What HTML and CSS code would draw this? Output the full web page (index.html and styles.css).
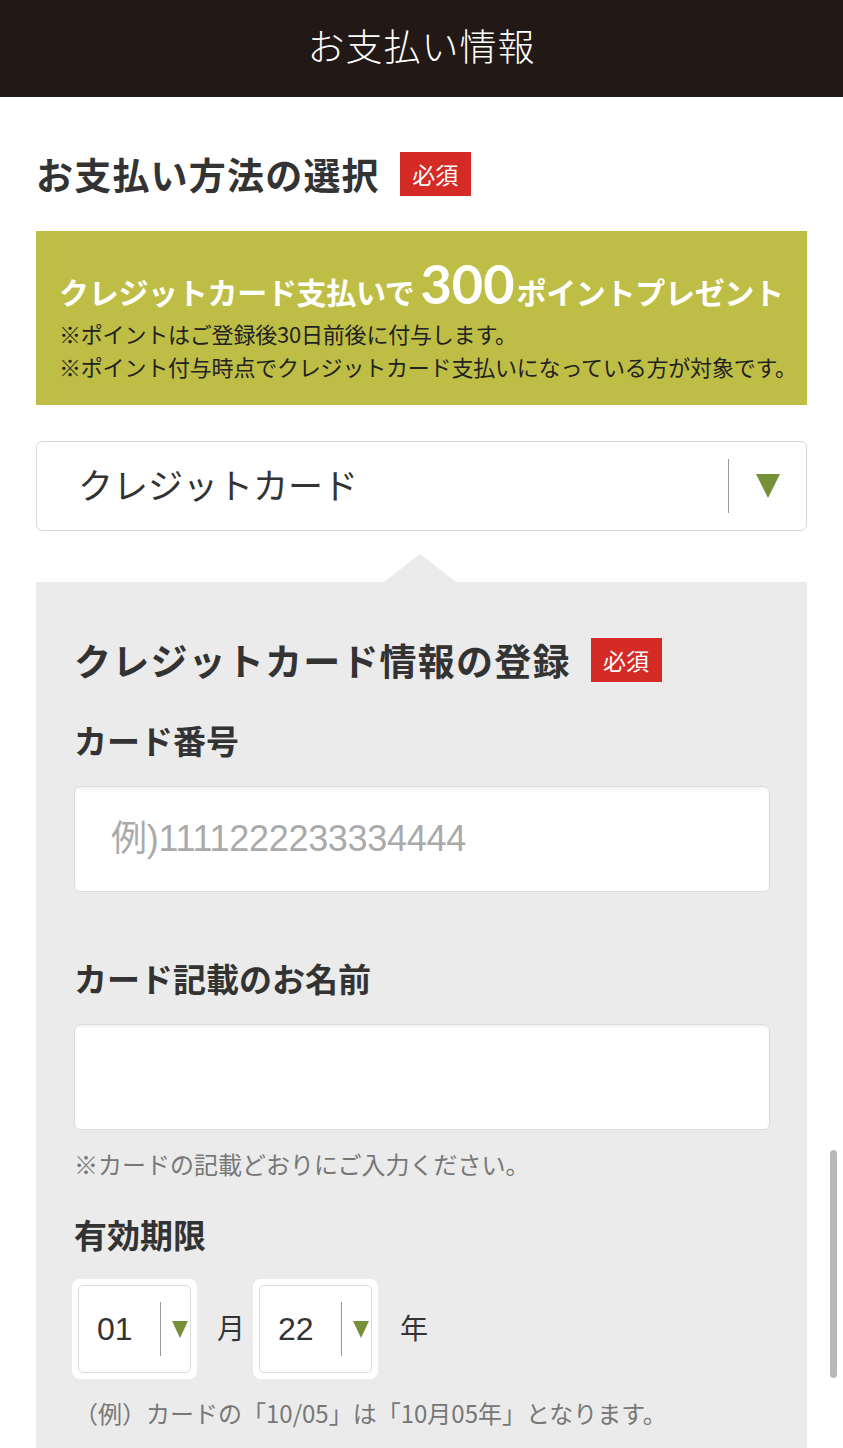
FILE: index.html
```html
<!DOCTYPE html>
<html lang="ja">

<head>
  <meta charset="UTF-8" />
  <meta name="viewport" content="width=device-width, initial-scale=1.0" />
  <title>お支払い情報</title>
  <link rel="stylesheet" href="styles.css">
</head>

<body>
  <!-- Top bar -->
  <header class="topbar">
    <h1 class="topbar-title">お支払い情報</h1>
  </header>

  <main class="content">
    <!-- Payment method -->
    <div class="section-head">
      <h2 class="section-title">お支払い方法の選択</h2>
      <span class="badge">必須</span>
    </div>

    <div class="promo">
      <p class="promo-lead">クレジットカード支払いで<span class="promo-num">300</span>ポイントプレゼント</p>
      <p class="promo-note">※ポイントはご登録後30日前後に付与します。</p>
      <p class="promo-note">※ポイント付与時点でクレジットカード支払いになっている方が対象です。</p>
    </div>

    <div class="picker">
      <span class="picker-value">クレジットカード</span>
      <span class="picker-line"></span>
      <span class="arrow arrow-lg"></span>
    </div>

    <!-- Credit card panel -->
    <section class="card-panel">
      <div class="section-head">
        <h2 class="section-title">クレジットカード情報の登録</h2>
        <span class="badge">必須</span>
      </div>

      <div class="field">
        <label class="field-label" for="card-no">カード番号</label>
        <input class="text-input" id="card-no" type="text" placeholder="例)1111222233334444" />
      </div>

      <div class="field field-name">
        <label class="field-label" for="card-name">カード記載のお名前</label>
        <input class="text-input" id="card-name" type="text" />
        <p class="hint">※カードの記載どおりにご入力ください。</p>
      </div>

      <div class="field field-date">
        <span class="field-label">有効期限</span>
        <div class="date-row">
          <div class="date-box">
            <div class="date-select">
              <span class="date-value">01</span>
              <span class="date-line"></span>
              <span class="arrow arrow-sm"></span>
            </div>
          </div>
          <span class="date-unit unit-month">月</span>
          <div class="date-box">
            <div class="date-select">
              <span class="date-value">22</span>
              <span class="date-line"></span>
              <span class="arrow arrow-sm"></span>
            </div>
          </div>
          <span class="date-unit unit-year">年</span>
        </div>
        <p class="hint hint-date">（例）カードの「10/05」は「10月05年」となります。</p>
      </div>
    </section>
  </main>

  <!-- scroll indicator -->
  <div class="scroll-thumb"></div>
</body>

</html>
```

FILE: styles.css
```css
/* base */
body {
  margin: 0;
  width: 843px;
  font-family: "Noto Sans CJK JP", "Noto Sans", sans-serif;
  color: #333;
  background-color: #fff;
}

p,
h1,
h2 {
  margin: 0;
}

/* top bar */
.topbar {
  height: 97px;
  background-color: #221815;
  display: flex;
  align-items: center;
  justify-content: center;
}

.topbar-title {
  color: #fff;
  font-size: 37px;
  font-weight: 300;
  line-height: 1;
  letter-spacing: 1px;
  margin-top: -6px;
}

/* content */
.content {
  padding: 0 36px;
}

.section-head {
  display: flex;
  align-items: center;
  gap: 20px;
  height: 44px;
  margin-top: 55px;
}

.section-title {
  font-size: 37px;
  font-weight: 700;
  letter-spacing: 1.2px;
  color: #333;
  line-height: 1;
}

.badge {
  width: 71px;
  height: 44px;
  background-color: #d42b26;
  color: #fff;
  font-size: 23px;
  line-height: 44px;
  text-align: center;
}

/* promo banner */
.promo {
  margin-top: 35px;
  height: 174px;
  box-sizing: border-box;
  padding: 26px 20px 0 23px;
  background-color: #bebe46;
}

.promo-lead {
  color: #fff;
  font-size: 30px;
  font-weight: 700;
  line-height: 60px;
  height: 60px;
  white-space: nowrap;
  letter-spacing: -0.3px;
}

.promo-num {
  font-family: "Lato", "Noto Sans", sans-serif;
  font-size: 54px;
  font-weight: 700;
  line-height: 1;
  margin: 0 2px 0 6px;
  letter-spacing: 0;
}

.promo-note {
  color: #222;
  font-size: 22px;
  line-height: 33px;
  white-space: nowrap;
  letter-spacing: -0.2px;
}

/* select box */
.picker {
  margin-top: 36px;
  height: 90px;
  box-sizing: border-box;
  border: 1px solid #d8d8d8;
  border-radius: 6px;
  background-color: #fff;
  display: flex;
  align-items: center;
  padding: 0 26px 0 41px;
}

.picker-value {
  flex: 1;
  font-size: 35px;
  color: #333;
  line-height: 1;
  margin-top: -5px;
}

.picker-line {
  width: 1px;
  height: 54px;
  background-color: #999;
  margin-right: 27px;
}

.arrow {
  width: 0;
  height: 0;
  border-style: solid;
  border-color: #76903a transparent transparent transparent;
}

.arrow-lg {
  border-width: 24px 12.5px 0 12.5px;
}

.arrow-sm {
  border-width: 17px 8px 0 8px;
}

/* grey panel */
.card-panel {
  position: relative;
  margin-top: 51px;
  background-color: #ebebeb;
  padding: 1px 37px 60px 38px;
}

.card-panel::before {
  content: "";
  position: absolute;
  top: -28px;
  left: 348px;
  border-style: solid;
  border-width: 0 36px 28px 36px;
  border-color: transparent transparent #ebebeb transparent;
}

.card-panel .section-head {
  margin-top: 55px;
}

.field {
  display: flex;
  flex-direction: column;
  margin-top: 36px;
}

.field-name {
  margin-top: 64px;
}

.field-date {
  margin-top: 32px;
}

.field-label {
  font-size: 33px;
  font-weight: 700;
  line-height: 44px;
  color: #333;
}

.text-input {
  margin-top: 24px;
  height: 106px;
  box-sizing: border-box;
  border: 1px solid #dcdcdc;
  border-radius: 6px;
  background-color: #fff;
  box-shadow: inset 0 2px 3px rgba(0, 0, 0, 0.06);
  padding: 0 36px;
  font-family: "Liberation Sans", "Noto Sans CJK JP", sans-serif;
  font-size: 36px;
  letter-spacing: -0.3px;
  color: #333;
  outline: none;
}

.text-input::placeholder {
  color: #aaa;
}

.hint {
  margin-top: 17px;
  font-size: 24px;
  line-height: 33px;
  color: #777;
}

/* expiry */
.date-row {
  display: flex;
  align-items: center;
  margin-top: 23px;
  margin-left: -2px;
}

.date-box {
  background-color: #fff;
  padding: 6px;
  border-radius: 8px;
}

.date-select {
  width: 113px;
  height: 88px;
  box-sizing: border-box;
  border: 1px solid #dcdcdc;
  border-radius: 5px;
  display: flex;
  align-items: center;
  padding-left: 18px;
}

.date-value {
  width: 63px;
  font-family: "Liberation Sans", sans-serif;
  font-size: 32px;
  color: #333;
  line-height: 1;
}

.date-line {
  width: 1px;
  height: 54px;
  background-color: #999;
  margin-right: 11px;
}

.date-unit {
  font-size: 28px;
  color: #333;
  line-height: 1;
  margin-top: -4px;
}

.unit-month {
  margin: -4px 8px 0 20px;
}

.unit-year {
  margin-left: 22px;
}

.hint-date {
  margin-top: 17px;
  margin-left: 0;
}

/* scrollbar overlay */
.scroll-thumb {
  position: fixed;
  top: 1150px;
  right: 6px;
  width: 7px;
  height: 228px;
  border-radius: 4px;
  background-color: rgba(0, 0, 0, 0.28);
}
```
